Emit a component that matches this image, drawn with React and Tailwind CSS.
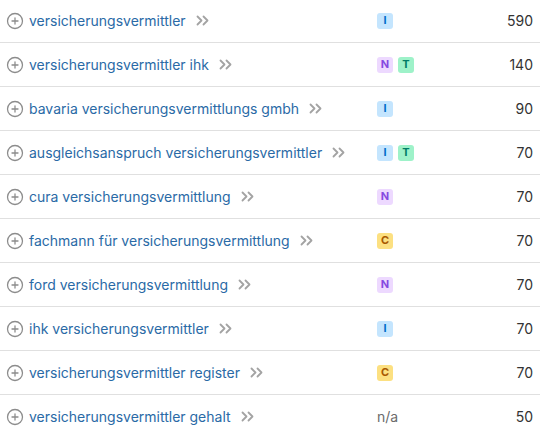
import { CirclePlus } from "lucide-react";

const INTENT = {
  I: "bg-[#c4e5fe] text-[#006dca]",
  N: "bg-[#edd9ff] text-[#8649e1]",
  C: "bg-[#fce081] text-[#a75800]",
  T: "bg-[#9ef2c9] text-[#007c65]",
};

const ROWS = [
  { kw: "versicherungsvermittler", intents: ["I"], vol: 590 },
  { kw: "versicherungsvermittler ihk", intents: ["N", "T"], vol: 140 },
  { kw: "bavaria versicherungsvermittlungs gmbh", intents: ["I"], vol: 90 },
  { kw: "ausgleichsanspruch versicherungsvermittler", intents: ["I", "T"], vol: 70 },
  { kw: "cura versicherungsvermittlung", intents: ["N"], vol: 70 },
  { kw: "fachmann für versicherungsvermittlung", intents: ["C"], vol: 70 },
  { kw: "ford versicherungsvermittlung", intents: ["N"], vol: 70 },
  { kw: "ihk versicherungsvermittler", intents: ["I"], vol: 70 },
  { kw: "versicherungsvermittler register", intents: ["C"], vol: 70 },
  { kw: "versicherungsvermittler gehalt", intents: [], vol: 50 },
];

function Chevrons() {
  return (
    <svg width="13" height="11" viewBox="0 0 13 11" fill="none" stroke="#a3a3a3" strokeWidth="1.8" strokeLinecap="round" strokeLinejoin="round">
      <path d="M1.5 1.5 L5.5 5.5 L1.5 9.5" />
      <path d="M7.5 1.5 L11.5 5.5 L7.5 9.5" />
    </svg>
  );
}

export default function App() {
  return (
    <div className="w-[540px] h-[430px] overflow-hidden bg-white" style={{ fontFamily: "Inter, 'Noto Sans', sans-serif" }}>
      <div className="-mt-px">
        {ROWS.map((r, i) => (
          <div key={i} className="h-[44px] flex items-center border-b border-[#e0e0e0]">
            <div className="w-[377px] flex items-center pl-[6px]">
              <CirclePlus size={18} strokeWidth={1.7} className="text-[#8c8c8c] shrink-0" />
              <span className="ml-[5px] text-[14px] text-[#2a6aa6] whitespace-nowrap">{r.kw}</span>
              <span className="ml-[10px] flex items-center"><Chevrons /></span>
            </div>
            <div className="flex-1 flex items-center gap-[5px]">
              {r.intents.length ? r.intents.map((t) => (
                <span key={t} className={`w-[16px] h-[16px] rounded-[3px] flex items-center justify-center text-[11px] font-bold leading-none ${INTENT[t]}`}>
                  {t}
                </span>
              )) : (
                <span className="text-[14px] text-[#6b6b6b]">n/a</span>
              )}
            </div>
            <div className="pr-[7px] text-[14px] text-[#333]">{r.vol}</div>
          </div>
        ))}
      </div>
    </div>
  );
}
